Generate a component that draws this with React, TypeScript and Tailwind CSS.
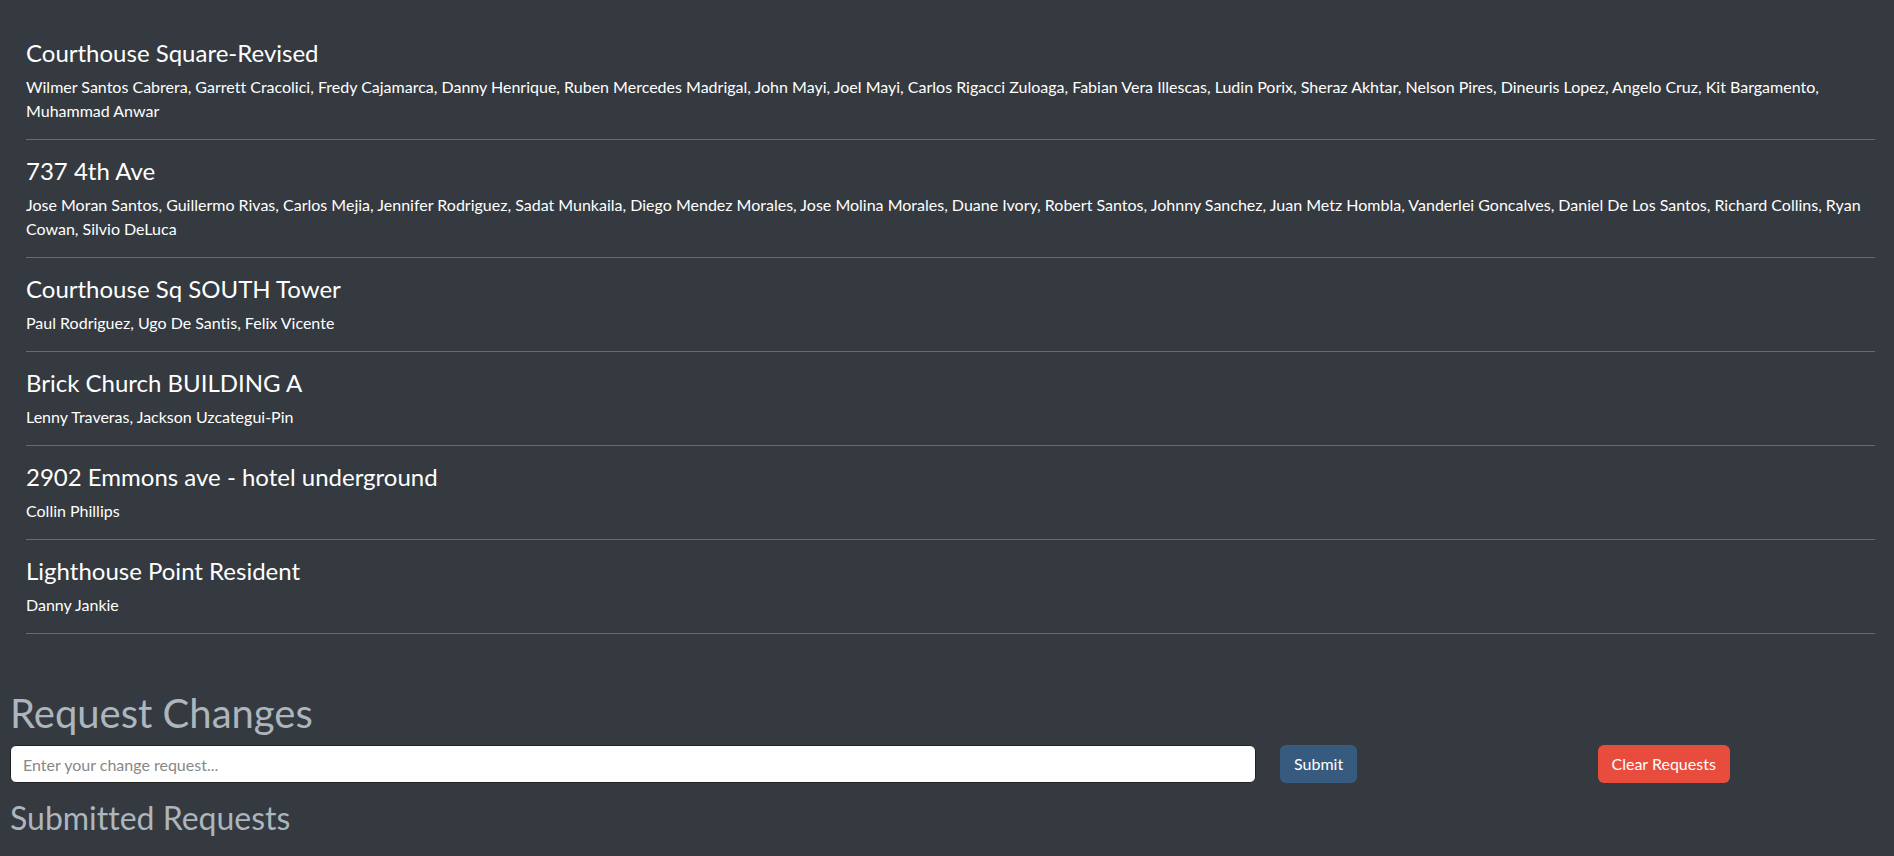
const sites = [
  { name: "Courthouse Square-Revised", crew: "Wilmer Santos Cabrera, Garrett Cracolici, Fredy Cajamarca, Danny Henrique, Ruben Mercedes Madrigal, John Mayi, Joel Mayi, Carlos Rigacci Zuloaga, Fabian Vera Illescas, Ludin Porix, Sheraz Akhtar, Nelson Pires, Dineuris Lopez, Angelo Cruz, Kit Bargamento, Muhammad Anwar" },
  { name: "737 4th Ave", crew: "Jose Moran Santos, Guillermo Rivas, Carlos Mejia, Jennifer Rodriguez, Sadat Munkaila, Diego Mendez Morales, Jose Molina Morales, Duane Ivory, Robert Santos, Johnny Sanchez, Juan Metz Hombla, Vanderlei Goncalves, Daniel De Los Santos, Richard Collins, Ryan Cowan, Silvio DeLuca" },
  { name: "Courthouse Sq SOUTH Tower", crew: "Paul Rodriguez, Ugo De Santis, Felix Vicente" },
  { name: "Brick Church BUILDING A", crew: "Lenny Traveras, Jackson Uzcategui-Pin" },
  { name: "2902 Emmons ave - hotel underground", crew: "Collin Phillips" },
  { name: "Lighthouse Point Resident", crew: "Danny Jankie" },
];

export default function App() {
  return (
    <main className="min-h-screen bg-[#343a40] pt-[22px] pr-[3px] pb-4 pl-[10px] font-['Lato',sans-serif] text-base text-white [font-variant-ligatures:none]">
      <section className="pr-4 pb-[55px] pl-4">
        {sites.map((site) => (
          <article key={site.name} className="border-b border-[#676b6e] pt-4 pb-4">
            <h4 className="mb-2 text-2xl leading-[29px] font-normal">{site.name}</h4>
            <p>{site.crew}</p>
          </article>
        ))}
      </section>
      <h1 className="mb-2 text-[40px] leading-[48px] font-normal text-[#adb5bd]">Request Changes</h1>
      <form className="grid grid-cols-12 gap-x-6" onSubmit={(e) => e.preventDefault()}>
        <input aria-label="Change request" placeholder="Enter your change request..." className="col-span-8 h-[38px] rounded-md border border-[#222222] bg-white px-3 text-[#222222] placeholder:text-[#888888]" />
        <div className="col-span-2">
          <button type="submit" className="h-[38px] rounded-md bg-[#375a7f] px-[14px]">Submit</button>
        </div>
        <div className="col-span-2">
          <button type="button" className="h-[38px] rounded-md bg-[#e74c3c] px-[14px]">Clear Requests</button>
        </div>
      </form>
      <h2 className="mt-4 text-[32px] leading-[38px] font-normal text-[#adb5bd]">Submitted Requests</h2>
    </main>
  );
}
